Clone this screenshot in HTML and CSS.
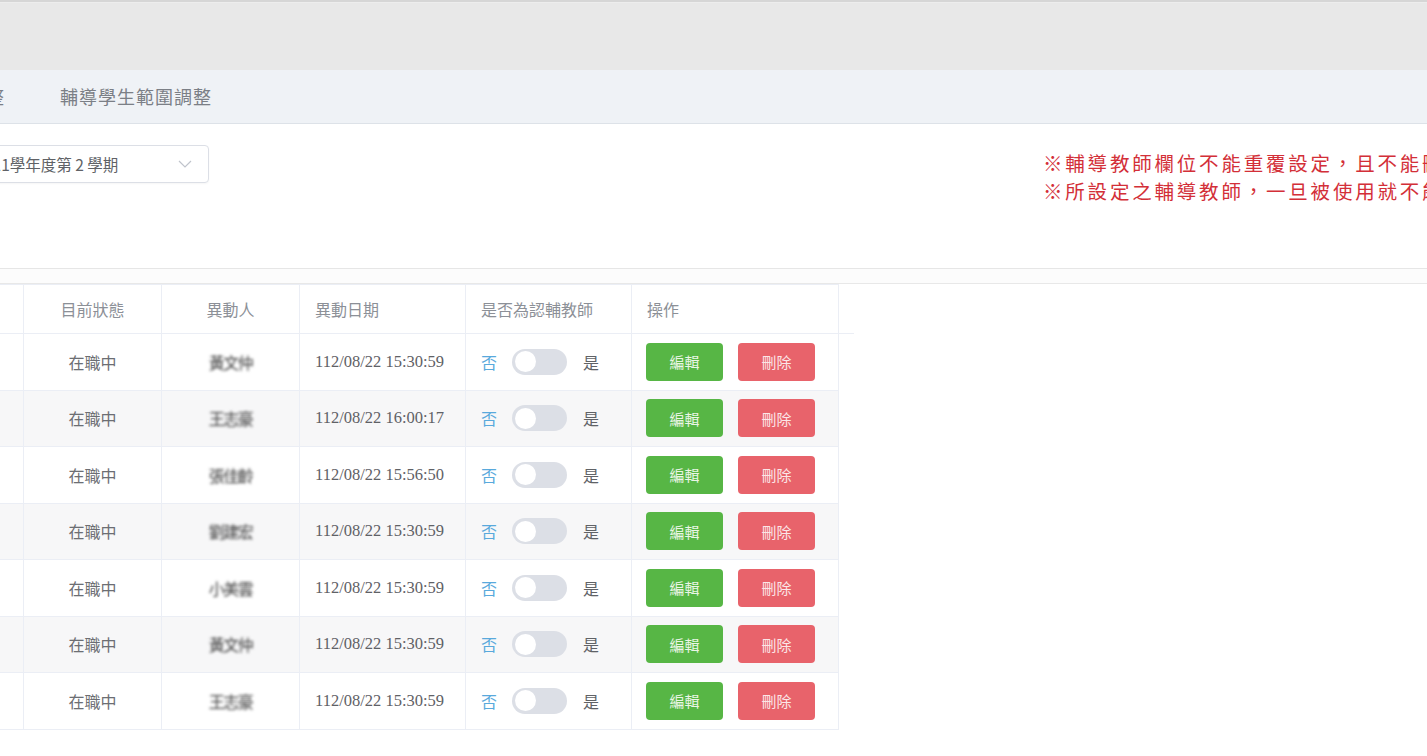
FILE: index.html
```html
<!DOCTYPE html>
<html lang="zh-Hant">
<head>
<meta charset="utf-8">
<title>輔導學生範圍調整</title>
<link rel="stylesheet" href="styles.css">
</head>
<body>
<div class="topbar"></div>
<nav class="tabs">
  <span class="tab">輔導教師調整</span>
  <span class="tab">輔導學生範圍調整</span>
</nav>
<section class="filter">
  <div class="select">
    <span class="select-text">111學年度第 2 學期</span>
    <svg class="chev" width="14" height="8" viewBox="0 0 14 8"><path d="M1 1 L7 7 L13 1" fill="none" stroke="#c0c4cc" stroke-width="1.2"/></svg>
  </div>
  <div class="notes">
    <p>※輔導教師欄位不能重覆設定，且不能刪除</p>
    <p>※所設定之輔導教師，一旦被使用就不能刪除</p>
  </div>
</section>
<div class="strip"></div>
<table class="grid">
  <colgroup>
    <col class="c0"><col class="c1"><col class="c2"><col class="c3"><col class="c4"><col class="c5"><col class="cg">
  </colgroup>
  <thead>
    <tr>
      <th>輔導教師</th>
      <th class="center">目前狀態</th>
      <th class="center">異動人</th>
      <th>異動日期</th>
      <th>是否為認輔教師</th>
      <th>操作</th>
      <th class="gutter"></th>
    </tr>
  </thead>
  <tbody>
    <tr>
      <td>王○○</td><td class="center">在職中</td><td class="center"><span class="blur">黃文仲</span></td>
      <td class="date">112/08/22 15:30:59</td>
      <td><div class="sw"><span class="no">否</span><span class="track"><span class="knob"></span></span><span class="yes">是</span></div></td>
      <td><div class="ops"><button class="btn edit">編輯</button><button class="btn del">刪除</button></div></td>
      <td class="gutter"></td>
    </tr>
    <tr class="alt">
      <td>李○○</td><td class="center">在職中</td><td class="center"><span class="blur">王志豪</span></td>
      <td class="date">112/08/22 16:00:17</td>
      <td><div class="sw"><span class="no">否</span><span class="track"><span class="knob"></span></span><span class="yes">是</span></div></td>
      <td><div class="ops"><button class="btn edit">編輯</button><button class="btn del">刪除</button></div></td>
      <td class="gutter"></td>
    </tr>
    <tr>
      <td>陳○○</td><td class="center">在職中</td><td class="center"><span class="blur">張佳齡</span></td>
      <td class="date">112/08/22 15:56:50</td>
      <td><div class="sw"><span class="no">否</span><span class="track"><span class="knob"></span></span><span class="yes">是</span></div></td>
      <td><div class="ops"><button class="btn edit">編輯</button><button class="btn del">刪除</button></div></td>
      <td class="gutter"></td>
    </tr>
    <tr class="alt">
      <td>林○○</td><td class="center">在職中</td><td class="center"><span class="blur">劉建宏</span></td>
      <td class="date">112/08/22 15:30:59</td>
      <td><div class="sw"><span class="no">否</span><span class="track"><span class="knob"></span></span><span class="yes">是</span></div></td>
      <td><div class="ops"><button class="btn edit">編輯</button><button class="btn del">刪除</button></div></td>
      <td class="gutter"></td>
    </tr>
    <tr>
      <td>張○○</td><td class="center">在職中</td><td class="center"><span class="blur">小美雲</span></td>
      <td class="date">112/08/22 15:30:59</td>
      <td><div class="sw"><span class="no">否</span><span class="track"><span class="knob"></span></span><span class="yes">是</span></div></td>
      <td><div class="ops"><button class="btn edit">編輯</button><button class="btn del">刪除</button></div></td>
      <td class="gutter"></td>
    </tr>
    <tr class="alt">
      <td>吳○○</td><td class="center">在職中</td><td class="center"><span class="blur">黃文仲</span></td>
      <td class="date">112/08/22 15:30:59</td>
      <td><div class="sw"><span class="no">否</span><span class="track"><span class="knob"></span></span><span class="yes">是</span></div></td>
      <td><div class="ops"><button class="btn edit">編輯</button><button class="btn del">刪除</button></div></td>
      <td class="gutter"></td>
    </tr>
    <tr>
      <td>周○○</td><td class="center">在職中</td><td class="center"><span class="blur">王志豪</span></td>
      <td class="date">112/08/22 15:30:59</td>
      <td><div class="sw"><span class="no">否</span><span class="track"><span class="knob"></span></span><span class="yes">是</span></div></td>
      <td><div class="ops"><button class="btn edit">編輯</button><button class="btn del">刪除</button></div></td>
      <td class="gutter"></td>
    </tr>
  </tbody>
</table>
</body>
</html>
```
FILE: styles.css
```css
* { box-sizing: border-box; }
html, body { margin: 0; padding: 0; }
body {
  width: 1427px;
  height: 756px;
  overflow: hidden;
  background: #fff;
  font-family: "Noto Sans CJK TC", "Noto Sans", sans-serif;
  color: #606266;
}
.topbar {
  height: 70px;
  background: #e8e8e8;
  border-top: 2px solid #d6d6d6;
  box-shadow: inset 0 1px 0 #ededed;
}
.tabs {
  height: 54px;
  background: #eff2f6;
  border-bottom: 1px solid #dde2e8;
  display: flex;
  align-items: center;
  gap: 55px;
  margin-left: -109px;
  padding-bottom: 2px;
}
.tab {
  font-size: 18px;
  letter-spacing: 1px;
  color: #7b7f86;
  white-space: nowrap;
}
.filter {
  height: 145px;
  border-bottom: 1px solid #e6e6e6;
  display: flex;
  align-items: flex-start;
  padding-top: 21px;
}
.select {
  flex: none;
  width: 239px;
  height: 38px;
  margin-left: -30px;
  border: 1px solid #dcdfe6;
  border-radius: 4px;
  display: flex;
  align-items: center;
  justify-content: space-between;
  padding: 0 16px 0 13px;
  box-shadow: 0 1px 2px rgba(0,0,0,0.04);
}
.select-text {
  font-size: 15.5px;
  color: #606266;
  white-space: nowrap;
}
.chev { display: block; }
.notes {
  flex: none;
  margin-left: 834px;
  padding-top: 4px;
  white-space: nowrap;
}
.notes p {
  margin: 0;
  font-size: 19.5px;
  line-height: 28px;
  letter-spacing: 2.8px;
  font-weight: 400;
  color: #d32f38;
}
.strip {
  height: 15px;
  background: #fcfcfc;
  border-bottom: 1px solid #e8e8e8;
}
.grid {
  border-collapse: collapse;
  table-layout: fixed;
  margin-left: -117px;
  width: 970px;
}
.c0 { width: 140px; }
.c1 { width: 138px; }
.c2 { width: 138px; }
.c3 { width: 166px; }
.c4 { width: 166px; }
.c5 { width: 207px; }
.cg { width: 15px; }
.grid th, .grid td {
  border: 1px solid #ebeef5;
  padding: 0 15px;
  text-align: left;
  white-space: nowrap;
  overflow: hidden;
}
.grid th {
  height: 49px;
  font-size: 16px;
  font-weight: normal;
  color: #8c9097;
}
.grid td {
  height: 56.5px;
  font-size: 16px;
  color: #6c6e73;
}
.grid .center { text-align: center; }
.grid th.gutter { border-left: 1px solid #ebeef5; border-right: none; border-top: none; }
.grid td.gutter { border: none; }
.grid tr.alt td { background: #f7f7f8; }
.grid tr.alt td.gutter { background: transparent; }
.grid td.date {
  font-family: "Liberation Serif", serif;
  font-size: 16.5px;
  color: #5f6166;
}
.blur {
  display: inline-block;
  font-size: 16px;
  color: #3a3a3a;
  letter-spacing: -1.5px;
  filter: blur(1.4px);
}
.sw {
  display: flex;
  align-items: center;
}
.no { color: #59a9dc; font-size: 16px; }
.yes { color: #606266; font-size: 16px; margin-left: 16px; }
.track {
  margin-left: 15px;
  width: 55px;
  height: 26px;
  border-radius: 13px;
  background: #dcdfe6;
  display: flex;
  align-items: center;
  padding-left: 3px;
}
.knob {
  width: 21px;
  height: 21px;
  border-radius: 50%;
  background: #fff;
}
.ops {
  display: flex;
  gap: 15px;
  margin-left: -1px;
}
.btn {
  width: 77px;
  height: 38px;
  border: none;
  border-radius: 4px;
  font-family: "Noto Sans CJK TC", sans-serif;
  font-size: 15px;
  color: #eaf5e5;
  padding: 0;
}
.edit { background: #57b645; }
.del { background: #e8636b; color: #fbe6e7; }
```
